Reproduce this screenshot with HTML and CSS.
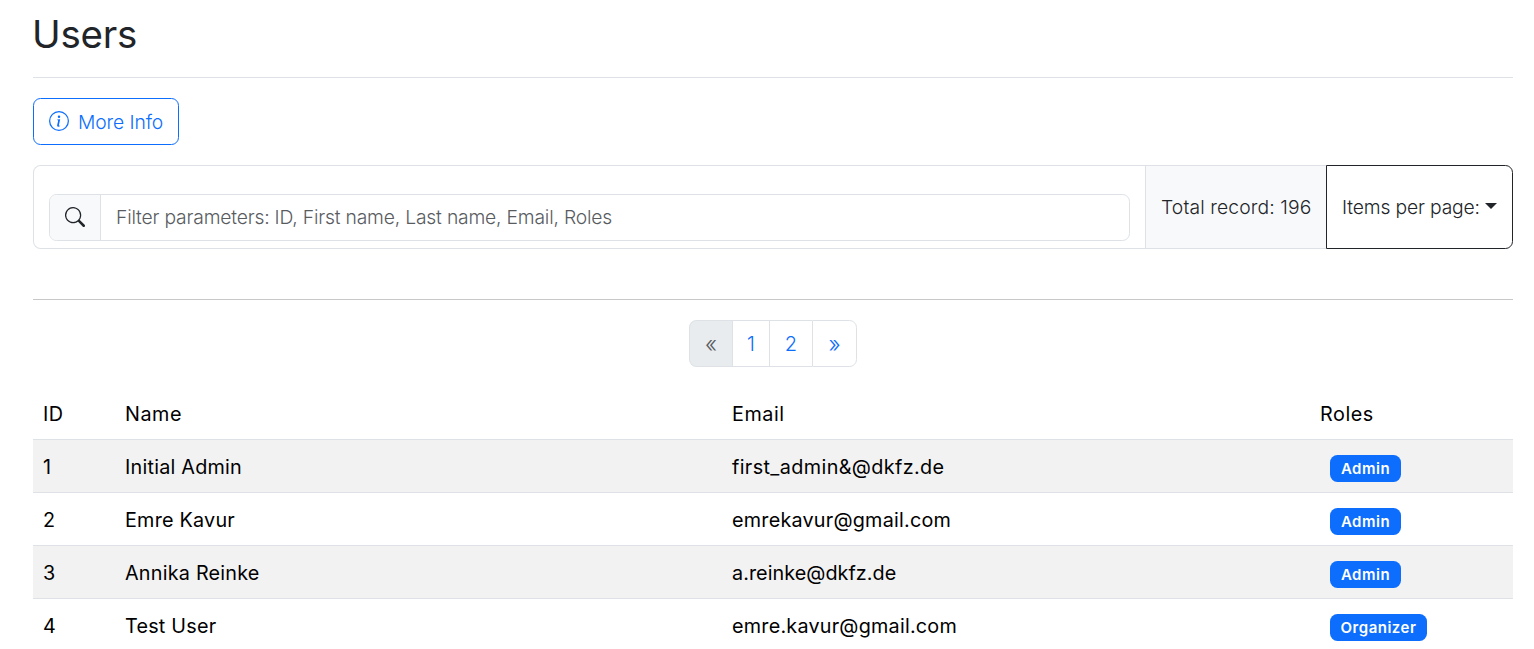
FILE: index.html
```html
<!DOCTYPE html>
<html lang="en">
<head>
<meta charset="utf-8">
<title>Users</title>
<link rel="stylesheet" href="styles.css">
</head>
<body>
<main class="page">
  <h1 class="title"><span>Users</span></h1>
  <button class="btn-info" type="button">
    <svg class="icon" viewBox="0 0 16 16" fill="currentColor"><path d="M8 15A7 7 0 1 1 8 1a7 7 0 0 1 0 14m0 1A8 8 0 1 0 8 0a8 8 0 0 0 0 16"/><path d="m8.930 6.588-2.290.287-.082.380.450.083c.294.070.352.176.288.469l-.738 3.468c-.194.897.105 1.319.808 1.319.545 0 1.178-.252 1.465-.598l.088-.416c-.200.176-.492.246-.686.246-.275 0-.375-.193-.304-.533zM9 4.500a1 1 0 1 1-2 0 1 1 0 0 1 2 0"/></svg>
    <span class="info-label">More Info</span>
  </button>
  <div class="toolbar">
    <div class="filter">
      <div class="search">
        <span class="search-icon"><svg class="icon" viewBox="0 0 16 16" fill="currentColor"><path d="M11.742 10.344a6.500 6.500 0 1 0-1.397 1.398h-.001q.044.060.098.115l3.850 3.850a1 1 0 0 0 1.415-1.414l-3.850-3.850a1 1 0 0 0-.115-.100zM12 6.500a5.500 5.500 0 1 1-11 0 5.500 5.500 0 0 1 11 0"/></svg></span>
        <span class="search-text">Filter parameters: ID, First name, Last name, Email, Roles</span>
      </div>
    </div>
    <div class="total"><span class="total-label">Total record: 196</span></div>
    <button class="per-page" type="button"><span class="per-page-label">Items per page:</span><span class="caret"></span></button>
  </div>
  <hr class="rule">
  <nav class="pagination">
    <a class="page-link first">«</a><a class="page-link narrow">1</a><a class="page-link">2</a><a class="page-link last">»</a>
  </nav>
  <table class="users">
    <colgroup><col class="c-id"><col class="c-name"><col class="c-email"><col class="c-roles"></colgroup>
    <thead><tr><th>ID</th><th>Name</th><th>Email</th><th>Roles</th></tr></thead>
    <tbody>
      <tr><td>1</td><td>Initial Admin</td><td class="loose">first_admin&amp;@dkfz.de</td><td><span class="badge">Admin</span></td></tr>
      <tr><td>2</td><td>Emre Kavur</td><td>emrekavur@gmail.com</td><td><span class="badge">Admin</span></td></tr>
      <tr><td>3</td><td>Annika Reinke</td><td class="tight">a.reinke@dkfz.de</td><td><span class="badge">Admin</span></td></tr>
      <tr><td>4</td><td>Test User</td><td>emre.kavur@gmail.com</td><td><span class="badge wide">Organizer</span></td></tr>
    </tbody>
  </table>
</main>
</body>
</html>
```
FILE: styles.css
```css
* { box-sizing: border-box; }
body {
  margin: 0;
  height: 649px;
  overflow: hidden;
  background: #fff;
  color: #212529;
  font: 300 19.3px/30px Inter, "Liberation Sans", sans-serif;
}
.page { padding: 0 21px 0 33px; }
.title {
  height: 78px;
  margin: 0 0 20px;
  padding-top: 10px;
  border-bottom: 1px solid #dee2e6;
  font-size: 38.5px;
  font-weight: 400;
  letter-spacing: -0.2px;
  text-indent: -1px;
  line-height: 48px;
}
button { font: inherit; background: #fff; }
.icon { display: block; width: 20px; height: 20px; flex: none; }
.btn-info {
  display: flex;
  align-items: center;
  gap: 9px;
  width: 146px;
  height: 47px;
  padding: 0 0 0 15px;
  border: 1px solid #0d6efd;
  border-radius: 7.5px;
  color: #0d6efd;
  white-space: nowrap;
}
.btn-info .icon { margin-top: -1px; }
.info-label { letter-spacing: -0.1px; }
.toolbar { display: flex; height: 84px; margin-top: 20px; white-space: nowrap; }
.filter {
  flex: 1;
  padding: 28px 15px 0;
  border: 1px solid #dee2e6;
  border-right: 0;
  border-radius: 7.5px 0 0 7.5px;
}
.search { display: flex; height: 47px; border: 1px solid #dee2e6; border-radius: 7.5px; }
.search-icon {
  display: flex;
  align-items: center;
  justify-content: center;
  width: 51px;
  padding-bottom: 1px;
  background: #f8f9fa;
  border-right: 1px solid #dee2e6;
  border-radius: 6.5px 0 0 6.5px;
}
.search-text { padding-left: 15px; line-height: 45px; color: #595c5f; letter-spacing: -0.19px; }
.total {
  width: 181px;
  padding-left: 15px;
  background: #f8f9fa;
  border: 1px solid #dee2e6;
  border-right: 0;
  line-height: 82px;
  letter-spacing: 0.12px;
}
.per-page {
  display: flex;
  align-items: center;
  justify-content: space-between;
  width: 187px;
  padding: 0 15px;
  border: 1px solid #212529;
  border-radius: 0 7.5px 7.5px 0;
  color: #212529;
}
.per-page-label { letter-spacing: -0.15px; }
.caret { border: 6px solid transparent; border-top-color: #212529; border-bottom: 0; margin-top: -3px; }
.rule { margin: 50px 0 20px; border: 0; border-top: 1px solid #c7c8c9; }
.pagination { display: flex; justify-content: center; height: 47px; }
.page-link {
  width: 43px;
  border: solid #dee2e6;
  border-width: 1px 0 1px 1px;
  color: #0d6efd;
  font-size: 20px;
  line-height: 46px;
  text-align: center;
}
.narrow { width: 37px; }
.first, .last { font-size: 22.5px; }
.first { width: 43px; background: #e9ecef; border-radius: 7.5px 0 0 7.5px; color: #595c5f; }
.last { width: 45px; border-right-width: 1px; border-radius: 0 7.5px 7.5px 0; }
.users {
  width: 100%;
  margin-top: 19px;
  border-collapse: collapse;
  table-layout: fixed;
  color: #000;
  font-size: 19.8px;
  letter-spacing: 0.22px;
  white-space: nowrap;
}
.c-id { width: 82px; }
.c-name { width: 607px; }
.c-email { width: 588px; }
.users th, .users td {
  height: 53px;
  padding: 2px 10px 0;
  border-bottom: 1px solid #dee2e6;
  text-align: left;
  font-weight: 400;
}
.users th { padding-top: 3px; letter-spacing: 0.55px; }
.users .loose { letter-spacing: 0.38px; }
.users .tight { letter-spacing: 0.05px; }
.users tbody tr:nth-child(odd) { background: #f2f2f2; }
.users td:last-child { padding-left: 20px; }
.badge {
  display: block;
  width: 71px;
  height: 27px;
  margin-top: 4px;
  border-radius: 7.5px;
  background: #0d6efd;
  color: #fff;
  font-size: 15px;
  font-weight: 600;
  letter-spacing: 0.5px;
  line-height: 27px;
  text-align: center;
}
.wide { width: 97px; }
```
